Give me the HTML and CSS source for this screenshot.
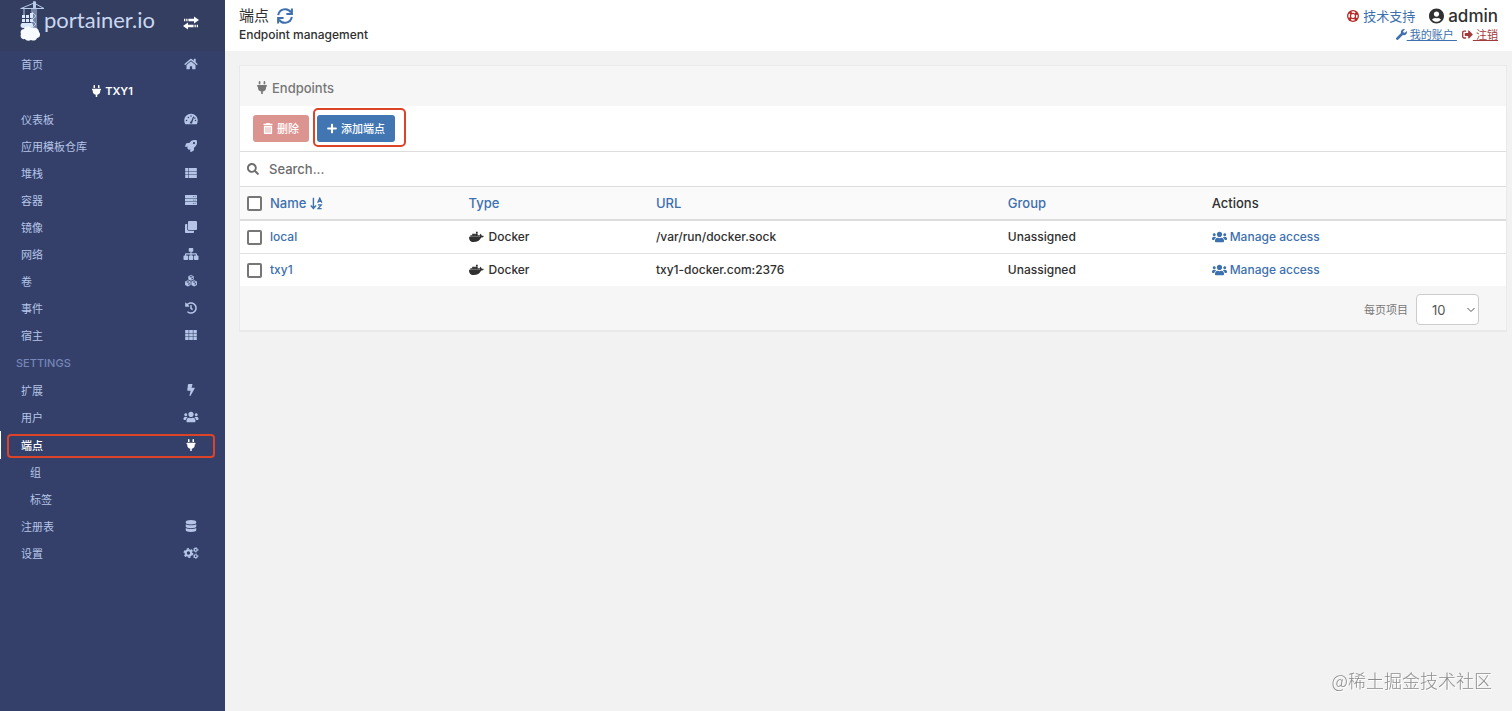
FILE: index.html
```html
<!DOCTYPE html>
<html lang="zh-CN">
<head>
<meta charset="utf-8">
<meta name="viewport" content="width=device-width, initial-scale=1">
<title>Portainer</title>
<link rel="stylesheet" href="styles.css">
</head>
<body>
<svg class="sprite" aria-hidden="true">
  <symbol id="plug" viewBox="0 0 384 512"><path d="M320,32a32,32,0,0,0-64,0v96h64Zm48,128H16A16,16,0,0,0,0,176v32a16,16,0,0,0,16,16H32v32A160.07,160.07,0,0,0,160,412.8V512h64V412.8A160.07,160.07,0,0,0,352,256V224h16a16,16,0,0,0,16-16V176A16,16,0,0,0,368,160ZM128,32a32,32,0,0,0-64,0v96h64Z"/></symbol>
  <symbol id="plus" viewBox="0 0 448 512"><path d="M416 208H272V64c0-17.67-14.33-32-32-32h-32c-17.67 0-32 14.33-32 32v144H32c-17.67 0-32 14.33-32 32v32c0 17.67 14.33 32 32 32h144v144c0 17.67 14.33 32 32 32h32c17.67 0 32-14.33 32-32V304h144c17.67 0 32-14.33 32-32v-32c0-17.67-14.33-32-32-32z"/></symbol>
  <symbol id="search" viewBox="0 0 512 512"><path d="M505 442.7L405.3 343c-4.5-4.5-10.6-7-17-7H372c27.6-35.3 44-79.7 44-128C416 93.1 322.9 0 208 0S0 93.1 0 208s93.1 208 208 208c48.3 0 92.7-16.4 128-44v16.3c0 6.4 2.5 12.5 7 17l99.7 99.7c9.4 9.4 24.6 9.4 33.9 0l28.3-28.3c9.4-9.4 9.4-24.6.1-34zM208 336c-70.7 0-128-57.2-128-128 0-70.7 57.2-128 128-128 70.7 0 128 57.2 128 128 0 70.7-57.2 128-128 128z"/></symbol>
  <symbol id="bolt" viewBox="0 0 320 512"><path d="M296 160H180.6l42.6-129.8C227.2 15 215.7 0 200 0H56C44 0 33.8 8.9 32.2 20.8l-32 240C-1.7 275.2 9.5 288 24 288h118.7L96.6 482.5c-3.6 15.2 8 29.5 23.3 29.5 8.4 0 16.4-4.4 20.8-12l176-304c9.3-15.9-2.2-36-20.7-36z"/></symbol>
  <symbol id="users" viewBox="0 0 640 512"><path d="M96 224c35.3 0 64-28.7 64-64s-28.7-64-64-64-64 28.7-64 64 28.7 64 64 64zm448 0c35.3 0 64-28.7 64-64s-28.7-64-64-64-64 28.7-64 64 28.7 64 64 64zm32 32h-64c-17.6 0-33.5 7.1-45.1 18.6 40.3 22.1 68.9 62 75.1 109.4h66c17.7 0 32-14.3 32-32v-32c0-35.3-28.7-64-64-64zm-256 0c61.9 0 112-50.1 112-112S381.9 32 320 32 208 82.1 208 144s50.1 112 112 112zm76.8 32h-8.3c-20.8 10-43.9 16-68.5 16s-47.6-6-68.5-16h-8.3C179.6 288 128 339.6 128 403.2V432c0 26.5 21.5 48 48 48h288c26.5 0 48-21.5 48-48v-28.8c0-63.6-51.6-115.2-115.2-115.2zm-223.7-13.4C161.5 263.1 145.6 256 128 256H64c-35.3 0-64 28.7-64 64v32c0 17.7 14.3 32 32 32h65.9c6.3-47.4 34.9-87.3 75.2-109.4z"/></symbol>
  <symbol id="database" viewBox="0 0 448 512"><path d="M448 73.143v45.714C448 159.143 347.667 192 224 192S0 159.143 0 118.857V73.143C0 32.857 100.333 0 224 0s224 32.857 224 73.143zM448 176v102.857C448 319.143 347.667 352 224 352S0 319.143 0 278.857V176c48.125 33.143 136.208 48.572 224 48.572S399.874 209.143 448 176zm0 160v102.857C448 479.143 347.667 512 224 512S0 479.143 0 438.857V336c48.125 33.143 136.208 48.572 224 48.572S399.874 369.143 448 336z"/></symbol>
  <symbol id="history" viewBox="0 0 512 512"><path d="M504 255.531c.253 136.64-111.18 248.372-247.82 248.468-59.015.042-113.223-20.53-155.822-54.911-11.077-8.94-11.905-25.541-1.839-35.607l11.267-11.267c8.609-8.609 22.353-9.551 31.891-1.984C173.062 425.135 212.781 440 256 440c101.705 0 184-82.311 184-184 0-101.705-82.311-184-184-184-48.814 0-93.149 18.969-126.068 49.932l50.754 50.754c10.08 10.08 2.941 27.314-11.313 27.314H24c-8.837 0-16-7.163-16-16V38.627c0-14.254 17.234-21.393 27.314-11.314l49.372 49.372C129.209 34.136 189.552 8 256 8c136.81 0 247.747 110.78 248 247.531zm-180.912 78.784l9.823-12.63c8.138-10.463 6.253-25.542-4.21-33.679L288 256.349V152c0-13.255-10.745-24-24-24h-16c-13.255 0-24 10.745-24 24v135.651l65.409 50.874c10.463 8.137 25.541 6.253 33.679-4.21z"/></symbol>
  <symbol id="home" viewBox="0 0 576 512"><path d="M280.37 148.26L96 300.11V464a16 16 0 0 0 16 16l112.06-.29a16 16 0 0 0 15.92-16V368a16 16 0 0 1 16-16h64a16 16 0 0 1 16 16v95.64a16 16 0 0 0 16 16.05L464 480a16 16 0 0 0 16-16V300L295.67 148.26a12.19 12.19 0 0 0-15.3 0zM571.6 251.47L488 182.56V44.05a12 12 0 0 0-12-12h-56a12 12 0 0 0-12 12v72.61L318.47 43a48 48 0 0 0-61 0L4.34 251.47a12 12 0 0 0-1.6 16.9l25.5 31A12 12 0 0 0 45.15 301l235.22-193.74a12.19 12.19 0 0 1 15.3 0L530.9 301a12 12 0 0 0 16.9-1.6l25.5-31a12 12 0 0 0-1.7-16.93z"/></symbol>
  <symbol id="gauge" viewBox="0 0 576 512"><path fill-rule="evenodd" d="M288 32C129 32 0 161 0 320c0 53 14 102 39 145 6 9 16 15 28 15h443c11 0 21-6 27-15 25-43 39-92 39-145C576 161 447 32 288 32zM96 352a32 32 0 1 1 0-64 32 32 0 0 1 0 64zm48-160a32 32 0 1 1 64 0 32 32 0 0 1-64 0zm336 160a32 32 0 1 1 0-64 32 32 0 0 1 0 64zM256 128a32 32 0 0 1 64 0 32 32 0 0 1-64 0zM401 154c13 5 19 17 15 30l-77 231c-4 10-1 17-3 33h-96c-6-50 17-84 54-94l77-185c5-13 17-19 30-15zM420 224l16-38a32 32 0 1 1-16 38z"/></symbol>
  <symbol id="rocket" viewBox="0 0 512 512"><path fill-rule="evenodd" d="M506 17c-1-6-5-10-11-11C460 0 430 0 409 0 304 0 238 55 185 128H95c-18 0-35 9-43 26L3 254c-8 16 4 34 21 34h109l-33 33c-9 9-9 25 0 34l57 57c9 9 25 9 34 0l33-33v109c0 17 18 29 34 21l100-49c17-8 26-25 26-43v-90c73-53 128-119 128-224 0-21 0-51-6-86zM384 176a48 48 0 1 1 0-96 48 48 0 0 1 0 96z"/></symbol>
  <symbol id="list" viewBox="0 0 512 512"><path d="M8 40h124v128H8zm148 0h348v128H156zM8 192h124v128H8zm148 0h348v128H156zM8 344h124v128H8zm148 0h348v128H156z"/></symbol>
  <symbol id="server" viewBox="0 0 512 512"><path fill-rule="evenodd" d="M24 40h464c14 0 24 10 24 24v80c0 14-10 24-24 24H24c-14 0-24-10-24-24V64c0-14 10-24 24-24zm0 152h464c14 0 24 10 24 24v80c0 14-10 24-24 24H24c-14 0-24-10-24-24v-80c0-14 10-24 24-24zm0 152h464c14 0 24 10 24 24v80c0 14-10 24-24 24H24c-14 0-24-10-24-24v-80c0-14 10-24 24-24zM352 92v32h32V92zm64 0v32h32V92zM352 240v32h32v-32zm64 0v32h32v-32zM352 388v32h32v-32zm64 0v32h32v-32z"/></symbol>
  <symbol id="clone" viewBox="0 0 512 512"><path d="M176 0h288c27 0 48 21 48 48v288c0 27-21 48-48 48H176c-27 0-48-21-48-48V48c0-27 21-48 48-48zM96 128v208c0 44 36 80 80 80h208v48c0 27-21 48-48 48H48c-27 0-48-21-48-48V176c0-27 21-48 48-48z"/></symbol>
  <symbol id="sitemap" viewBox="0 0 640 512"><path d="M256 0h128c18 0 32 14 32 32v96c0 18-14 32-32 32h-40v64h184c26 0 48 22 48 48v48h32c18 0 32 14 32 32v128c0 18-14 32-32 32H480c-18 0-32-14-32-32V352c0-18 14-32 32-32h48v-48H344v48h40c18 0 32 14 32 32v128c0 18-14 32-32 32H256c-18 0-32-14-32-32V352c0-18 14-32 32-32h40v-48H112v48h48c18 0 32 14 32 32v128c0 18-14 32-32 32H32c-18 0-32-14-32-32V352c0-18 14-32 32-32h32v-48c0-26 22-48 48-48h184v-64h-40c-18 0-32-14-32-32V32c0-18 14-32 32-32z"/></symbol>
  <symbol id="cubes" viewBox="0 0 512 512"><path fill-rule="evenodd" d="M256 0l116 48v142l-116 50-116-50V48zm0 44l-70 28 70 30 70-30zm20 148l60-26v-58l-60 26zM122 222l118 50v150l-118 66L4 422V272zm0 46l-70 28 70 30 70-30zm20 156l60-32v-56l-60 26zM390 222l118 50v150l-118 66-118-66V272zm0 46l-70 28 70 30 70-30zm20 156l60-32v-56l-60 26z"/></symbol>
  <symbol id="grid" viewBox="0 0 512 512"><path d="M8 40h146v126H8zm170 0h156v126H178zm180 0h146v126H358zM8 193h146v126H8zm170 0h156v126H178zm180 0h146v126H358zM8 346h146v126H8zm170 0h156v126H178zm180 0h146v126H358z"/></symbol>
  <symbol id="cogs" viewBox="0 0 640 512">
    <g fill="none" stroke="currentColor">
      <circle cx="210" cy="256" r="118" stroke-width="92"/><circle cx="210" cy="256" r="180" stroke-width="62" stroke-dasharray="94 94.5"/>
      <circle cx="520" cy="120" r="62" stroke-width="52"/><circle cx="520" cy="120" r="96" stroke-width="36" stroke-dasharray="50 50.5"/>
      <circle cx="520" cy="392" r="62" stroke-width="52"/><circle cx="520" cy="392" r="96" stroke-width="36" stroke-dasharray="50 50.5"/>
    </g>
  </symbol>
  <symbol id="sync" viewBox="0 0 16 16"><g fill="none" stroke="currentColor" stroke-width="2"><path d="M1.2 7.2A7 7 0 0 1 14 4.4M14.8 8.8A7 7 0 0 1 2 11.6"/><path d="M14.9.4v5.5H9.4M1.1 15.6v-5.5h5.5"/></g></symbol>
  <symbol id="ring" viewBox="0 0 16 16"><circle cx="8" cy="8" r="8"/><circle cx="8" cy="8" r="5.2" fill="none" stroke="#fff" stroke-width="2" stroke-dasharray="4.8 3.37" stroke-dashoffset="2.4"/><circle cx="8" cy="8" r="2.6" fill="#fff"/></symbol>
  <symbol id="user" viewBox="0 0 496 512"><path d="M248 8C111 8 0 119 0 256s111 248 248 248 248-111 248-248S385 8 248 8zm0 96c48.6 0 88 39.4 88 88s-39.4 88-88 88-88-39.4-88-88 39.4-88 88-88zm0 344c-58.7 0-111.3-26.6-146.5-68.2 18.8-35.4 55.6-59.8 98.5-59.8 2.4 0 4.8.4 7.1 1.1 13 4.2 26.6 6.9 40.9 6.9 14.3 0 28-2.7 40.9-6.9 2.3-.7 4.7-1.1 7.1-1.1 42.9 0 79.7 24.4 98.5 59.8C359.3 421.4 306.7 448 248 448z"/></symbol>
  <symbol id="wrench" viewBox="0 0 512 512"><path d="M507.73 109.1c-2.24-9.03-13.54-12.09-20.12-5.51l-74.36 74.36-67.88-11.31-11.31-67.88 74.36-74.36c6.62-6.62 3.43-17.9-5.66-20.16-47.38-11.74-99.55.91-136.58 37.93-39.64 39.64-50.55 97.1-34.05 147.2L18.74 402.76c-24.99 24.99-24.99 65.51 0 90.5 24.99 24.99 65.51 24.99 90.5 0l213.21-213.21c50.12 16.71 107.47 5.68 147.37-34.22 37.07-37.07 49.7-89.32 37.91-136.73z"/></symbol>
  <symbol id="signout" viewBox="0 0 512 512"><path d="M497 273L329 441c-15 15-41 4.5-41-17v-96H152c-13.3 0-24-10.7-24-24v-96c0-13.3 10.7-24 24-24h136V88c0-21.4 25.9-32 41-17l168 168c9.3 9.4 9.3 24.6 0 34zM192 436v-40c0-6.6-5.4-12-12-12H96c-17.7 0-32-14.3-32-32V160c0-17.7 14.3-32 32-32h84c6.6 0 12-5.4 12-12V76c0-6.6-5.4-12-12-12H96c-53 0-96 43-96 96v192c0 53 43 96 96 96h84c6.6 0 12-5.4 12-12z"/></symbol>
  <symbol id="trash" viewBox="0 0 448 512"><path fill-rule="evenodd" d="M16 32h112l24-32h144l24 32h112v64H16zM32 128h384v336c0 27-21 48-48 48H80c-27 0-48-21-48-48zm80 64v256h36V192zm94 0v256h36V192zm94 0v256h36V192z"/></symbol>
  <symbol id="docker" viewBox="0 0 640 512"><path d="M296 36h76v68h-76zM136 112h76v70h-76zm80 0h76v70h-76zm80 0h76v70h-76zM56 186h76v70H56zm80 0h76v70h-76zm80 0h76v70h-76zm80 0h76v70h-76zm80 0h76v70h-76zM630 214c-18-12-56-16-86-10-4-28-20-52-46-72l-16-10-10 16c-20 30-24 76-2 108-10 6-30 4-58 4H6c-16 100 34 222 186 222 158 0 272-68 328-198 50 2 88-14 110-54z"/></symbol>
  <symbol id="sort" viewBox="0 0 16 16"><g fill="none" stroke="currentColor" stroke-width="1.7"><path d="M4.2 1v12M1 10.5l3.2 3.7 3.2-3.7"/><path d="M9.4 7L12 1.4 14.6 7M10.3 5.2h3.4M9.8 9.6h4.1l-4 4.8h4.4" stroke-width="1.6"/></g></symbol>
  <symbol id="toggle" viewBox="0 0 16 14"><path d="M5.4 2.7H11V.4L16 4l-5 3.6V5.3H5.4zM3.2 2.7h1.3v2.6H3.2zM1 2.7h1.3v2.6H1zM10.6 8.7H5V6.4L0 10l5 3.6v-2.3h5.6zM11.5 8.7h1.3v2.6h-1.3zM13.7 8.7H15v2.6h-1.3z"/></symbol>
  <symbol id="crane" viewBox="0 0 24 40">
    <path d="M.5 7.5H24M1 7.5L14 2l10 5.5M14 0v28M12 7v21M16 7v21M12 11l4 4-4 4 4 4-4 4M4 7.5V14" fill="none" stroke="#b9cbea" stroke-width="1"/>
    <path d="M13 .5h3v7h-3z" fill="#b9cbea"/>
    <path d="M2 14h3v3H2zM6 14h3v3H6zM10 12h3v5h-3zM2 18h3v3H2zM6 18h3v3H6zM10 18h3v3h-3zM2 22h10c2 2 1 5-1 5H3c-3 0-3-4-1-5z" fill="#dbe8fa"/>
    <path d="M4 28c1-3 5-3 7-1 4-1 8 0 8 4 2 2 1 6-2 6-1 3-4 3-6 2-2 1-5 1-6-1-4 1-5-3-4-5-1-2 0-5 3-5z" fill="#f7fbff"/>
  </symbol>
</svg>

<div class="app">
  <aside class="sidebar">
    <div class="brand">
      <a class="logo" href="#"><svg class="crane"><use href="#crane"/></svg><span>portainer.io</span></a>
      <button class="toggle" type="button" aria-label="Toggle menu"><svg><use href="#toggle"/></svg></button>
    </div>
    <nav class="menu">
      <a class="item" href="#">首页<svg class="icon"><use href="#home"/></svg></a>
      <div class="current"><svg class="icon"><use href="#plug"/></svg>TXY1</div>
      <a class="item" href="#">仪表板<svg class="icon"><use href="#gauge"/></svg></a>
      <a class="item" href="#">应用模板仓库<svg class="icon"><use href="#rocket"/></svg></a>
      <a class="item" href="#">堆栈<svg class="icon"><use href="#list"/></svg></a>
      <a class="item" href="#">容器<svg class="icon"><use href="#server"/></svg></a>
      <a class="item" href="#">镜像<svg class="icon"><use href="#clone"/></svg></a>
      <a class="item" href="#">网络<svg class="icon"><use href="#sitemap"/></svg></a>
      <a class="item" href="#">卷<svg class="icon"><use href="#cubes"/></svg></a>
      <a class="item" href="#">事件<svg class="icon"><use href="#history"/></svg></a>
      <a class="item" href="#">宿主<svg class="icon"><use href="#grid"/></svg></a>
      <div class="section">SETTINGS</div>
      <a class="item" href="#">扩展<svg class="icon"><use href="#bolt"/></svg></a>
      <a class="item" href="#">用户<svg class="icon"><use href="#users"/></svg></a>
      <a class="item active" href="#">端点<svg class="icon"><use href="#plug"/></svg></a>
      <a class="item sub" href="#">组</a>
      <a class="item sub" href="#">标签</a>
      <a class="item" href="#">注册表<svg class="icon"><use href="#database"/></svg></a>
      <a class="item" href="#">设置<svg class="icon"><use href="#cogs"/></svg></a>
    </nav>
  </aside>

  <main class="main">
    <header class="topbar">
      <div>
        <h1 class="title">端点<a href="#" aria-label="Refresh"><svg class="sync"><use href="#sync"/></svg></a></h1>
        <p class="subtitle">Endpoint management</p>
      </div>
      <div class="account">
        <div class="who">
          <a class="support" href="#"><svg><use href="#ring"/></svg>技术支持</a>
          <span class="user"><svg><use href="#user"/></svg>admin</span>
        </div>
        <div class="links">
          <a href="#"><svg><use href="#wrench"/></svg>&nbsp;我的账户&nbsp;</a>
          <a class="logout" href="#"><svg><use href="#signout"/></svg>&nbsp;注销</a>
        </div>
      </div>
    </header>

    <section class="widget">
      <h2 class="widget-title"><svg class="icon"><use href="#plug"/></svg>Endpoints</h2>
      <div class="actions">
        <button class="btn danger" type="button" disabled><svg class="icon"><use href="#trash"/></svg>删除</button>
        <span class="marked"><button class="btn primary" type="button"><svg class="icon"><use href="#plus"/></svg>添加端点</button></span>
      </div>
      <label class="search"><svg><use href="#search"/></svg><input type="text" placeholder="Search..." aria-label="Search"></label>
      <table class="table">
        <colgroup><col class="c-name"><col class="c-type"><col class="c-url"><col class="c-group"><col></colgroup>
        <thead>
          <tr>
            <th><span class="cell"><input type="checkbox" aria-label="Select all"><a href="#">Name<svg class="sort"><use href="#sort"/></svg></a></span></th>
            <th><a href="#">Type</a></th><th><a href="#">URL</a></th><th><a href="#">Group</a></th><th>Actions</th>
          </tr>
        </thead>
        <tbody>
          <tr>
            <td><span class="cell"><input type="checkbox" aria-label="Select local"><a href="#">local</a></span></td>
            <td><span class="type"><svg><use href="#docker"/></svg>Docker</span></td>
            <td>/var/run/docker.sock</td><td>Unassigned</td>
            <td><a class="access" href="#"><svg><use href="#users"/></svg>Manage access</a></td>
          </tr>
          <tr>
            <td><span class="cell"><input type="checkbox" aria-label="Select txy1"><a href="#">txy1</a></span></td>
            <td><span class="type"><svg><use href="#docker"/></svg>Docker</span></td>
            <td>txy1-docker.com:2376</td><td>Unassigned</td>
            <td><a class="access" href="#"><svg><use href="#users"/></svg>Manage access</a></td>
          </tr>
        </tbody>
      </table>
      <footer class="pager">
        <label for="per-page">每页项目</label>
        <select id="per-page"><option>10</option><option>25</option><option>50</option></select>
      </footer>
    </section>
  </main>
</div>
<div class="watermark">@稀土掘金技术社区</div>
</body>
</html>
```
FILE: styles.css
```css
* { box-sizing: border-box; }

body {
  margin: 0;
  background: #f2f2f2;
  color: #303030;
  font: 500 13px/20px Inter, "Noto Sans CJK SC", sans-serif;
}

a { color: #3d70ae; text-decoration: none; }
svg { fill: currentColor; flex: none; }
button, input, select { font: inherit; color: inherit; }
.sprite { position: absolute; width: 0; height: 0; }

.app { display: flex; min-height: 100vh; }

/* Sidebar */
.sidebar { flex: none; width: 225px; background: #344069; }
.brand {
  display: flex;
  justify-content: space-between;
  height: 51px;
  padding: 1px 26px 0 20px;
  background: #343e60;
}
.logo { display: flex; color: #c9d7f0; font: 400 22px/37px Lato, sans-serif; }
.crane { width: 24px; height: 40px; }
.toggle { align-self: center; display: flex; padding: 0 0 6px; border: 0; background: none; color: #fff; }
.toggle svg { width: 16px; height: 14px; }

.menu { font-size: 11px; line-height: 26px; }
.item {
  position: relative;
  display: flex;
  align-items: center;
  justify-content: space-between;
  height: 27px;
  padding: 1px 24px 0 21px;
  color: #b5c4e8;
  font-weight: 400;
}
.item .icon { width: 20px; height: 12px; margin-bottom: 2px; }
.current {
  display: flex;
  align-items: center;
  justify-content: center;
  gap: 4px;
  height: 28px;
  padding-bottom: 2px;
  color: #fff;
  font-weight: 600;
}
.current .icon { width: 9px; height: 12px; }
.section { height: 28px; padding: 1px 16px; color: #7586b9; font-weight: 500; }
.item.sub { padding-left: 30px; }
.item.active { height: 28px; color: #fff; font-weight: 500; border-left: 1px solid #fff; padding-left: 20px; }
.item.active::after {
  content: "";
  position: absolute;
  inset: 3px 10px 1px 6px;
  border: 2px solid #dc4329;
  border-radius: 4px;
}

/* Page header */
.main { flex: 1; min-width: 0; }
.topbar {
  display: flex;
  justify-content: space-between;
  height: 51px;
  padding: 6px 14px 0 14px;
  background: #fff;
}
.title { display: flex; align-items: center; gap: 8px; margin: 0; font-size: 15px; font-weight: 400; line-height: 20px; }
.title a { display: flex; }
.sync { width: 16px; height: 16px; }
.subtitle { margin: 0; font-size: 12px; line-height: 18px; }
.account { display: flex; flex-direction: column; align-items: flex-end; }
.who { display: flex; align-items: center; gap: 14px; height: 20px; }
.support { display: flex; align-items: center; gap: 4px; font-weight: 400; }
.support svg { width: 12px; height: 12px; color: #b52b27; }
.user { display: flex; align-items: center; gap: 4px; font-size: 17px; }
.user svg { width: 15px; height: 16px; }
.links { display: flex; gap: 5px; font-size: 11px; font-weight: 400; line-height: 18px; }
.links a { text-decoration: underline; }
.links svg { width: 11px; height: 11px; vertical-align: -1px; }
.links .logout { color: #a33a3c; }

/* Endpoints widget */
.widget {
  margin: 14px 5px 0 14px;
  background: #fff;
  border: 1px solid #e9e9e9;
  border-bottom-width: 2px;
}
.widget-title {
  display: flex;
  align-items: center;
  gap: 5px;
  height: 40px;
  margin: 0;
  padding: 3px 17px 0;
  background: #f6f6f6;
  color: #767676;
  font-size: 13px;
  font-weight: 500;
}
.widget-title .icon { width: 10px; height: 13px; }
.actions { display: flex; gap: 8px; padding: 9px 13px; border-bottom: 1px solid #ddd; }
.btn {
  display: flex;
  align-items: center;
  gap: 4px;
  height: 27px;
  padding: 0 10px;
  border: 0;
  border-radius: 3px;
  color: #fff;
  font-size: 11px;
}
.btn .icon { width: 10px; height: 11px; }
.btn.danger { background: #dc9490; }
.btn.primary { background: #4176b3; }
.marked { position: relative; }
.marked::after {
  content: "";
  position: absolute;
  inset: -7px -11px -5px -4px;
  border: 2px solid #dc4329;
  border-radius: 5px;
  pointer-events: none;
}
.search { display: flex; align-items: center; gap: 10px; height: 34px; padding: 0 7px; color: #6c6c6c; }
.search svg { width: 12px; height: 12px; }
.search input { flex: 1; padding: 0; border: 0; outline: 0; background: none; }
.search input::placeholder { color: #6c6c6c; opacity: 1; }

.table { width: 100%; border-collapse: collapse; table-layout: fixed; text-align: left; }
.c-name { width: 17.5%; }
.c-type { width: 14.8%; }
.c-url { width: 27.8%; }
.c-group { width: 16.1%; }
.table th, .table td { padding: 6px 7px; font-weight: 500; border-top: 1px solid #e2e2e2; }
.table th { border-top-color: #ddd; background: #fafafa; }
.table td { font-size: 12px; vertical-align: middle; }
.table tbody tr:first-child td { border-top: 2px solid #ddd; }
.cell, .type, .access { display: flex; align-items: center; gap: 8px; }
.table input {
  appearance: none;
  width: 15px;
  height: 15px;
  margin: 0;
  border: 2px solid #767676;
  border-radius: 2px;
  background: #fff;
}
.table th a { display: flex; align-items: center; gap: 4px; }
.sort { width: 13px; height: 13px; }
.type { gap: 5px; }
.access { gap: 3px; }
.type svg, .access svg { width: 15px; height: 12px; }

.pager {
  display: flex;
  align-items: center;
  justify-content: flex-end;
  gap: 8px;
  padding: 8px 27px 5px;
  background: #f6f6f6;
  color: #777;
  font-size: 11px;
  font-weight: 400;
}
.pager select {
  appearance: none;
  width: 63px;
  height: 31px;
  padding: 0 15px;
  border: 1px solid #ccc;
  border-radius: 4px;
  color: #555;
  font-size: 13px;
  background: #fff url("data:image/svg+xml,%3Csvg xmlns='http://www.w3.org/2000/svg' width='8' height='6'%3E%3Cpath d='M.5 1L4 4.5 7.5 1' fill='none' stroke='%23555'/%3E%3C/svg%3E") no-repeat right 3px center;
}

.watermark {
  position: fixed;
  right: 20px;
  bottom: 18px;
  color: #8c8c8c;
  font: 300 18px/26px "Noto Sans CJK SC", sans-serif;
  text-shadow: 1px 1px 0 #fff;
}
```
